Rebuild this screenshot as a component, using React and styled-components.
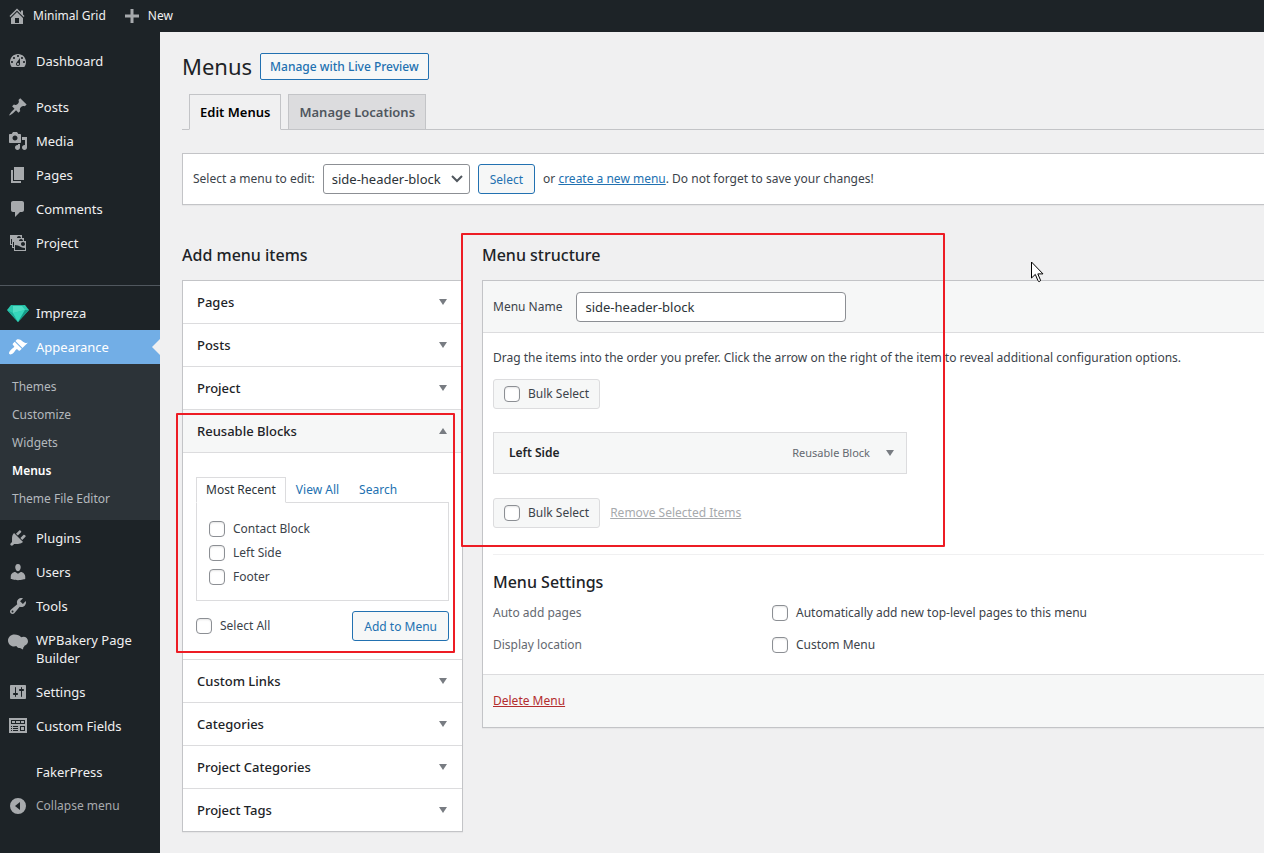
import React, { useState } from 'react';
import styled, { createGlobalStyle } from 'styled-components';

const GlobalStyle = createGlobalStyle`
  *, *::before, *::after {
    box-sizing: border-box;
  }
  body {
    margin: 0;
    background: #f0f0f1;
    color: #3c434a;
    font-family: 'Noto Sans', 'Open Sans', sans-serif;
    font-size: 12px;
    line-height: 18px;
    overflow-x: hidden;
  }
  button, input, select {
    font-family: inherit;
  }
`;

const icons = {
  home: 'M16 8.5l1.53 1.53-1.06 1.06L10 4.6l-6.47 6.49-1.06-1.06L10 2.5l4 4v-2h2v4zm-6-2.46l6 5.99V18H4v-5.97zM12 17v-5H8v5h4z',
  plus: 'M17 8.5v3h-5.500v5.500h-3v-5.500H3v-3h5.500V3h3v5.500z',
  dashboard:
    'M3.76 16h12.48c1.1-1.37 1.76-3.11 1.76-5 0-4.42-3.58-8-8-8s-8 3.58-8 8c0 1.89.66 3.63 1.76 5zM10 4c.55 0 1 .45 1 1s-.45 1-1 1-1-.45-1-1 .45-1 1-1zM6 6c.55 0 1 .45 1 1s-.45 1-1 1-1-.45-1-1 .45-1 1-1zm8 0c.55 0 1 .45 1 1s-.45 1-1 1-1-.45-1-1 .45-1 1-1zm-5.370 5.550L12 7v6c0 1.100-.9 2-2 2s-2-.9-2-2c0-.57.24-1.080.63-1.450zM4 10c.55 0 1 .45 1 1s-.45 1-1 1-1-.45-1-1 .45-1 1-1zm12 0c.55 0 1 .45 1 1s-.45 1-1 1-1-.45-1-1 .45-1 1-1zm-5 3c0-.55-.45-1-1-1s-1 .45-1 1 .45 1 1 1 1-.45 1-1z',
  post: 'M10.44 3.02l1.82-1.82 6.36 6.35-1.83 1.82c-1.05-.68-2.48-.57-3.41.36l-.75.75c-.92.93-1.04 2.35-.35 3.41l-1.83 1.82-2.41-2.41-2.8 2.79c-.42.42-3.38 2.71-3.8 2.29s1.86-3.39 2.28-3.81l2.79-2.79L4.1 9.36l1.83-1.82c1.05.69 2.48.57 3.4-.36l.75-.75c.93-.92 1.05-2.35.36-3.41z',
  media:
    'M13 11V4c0-.55-.45-1-1-1h-1.67L9 1H5L3.67 3H2c-.55 0-1 .45-1 1v7c0 .55.45 1 1 1h10c.55 0 1-.45 1-1zM7 4.5c1.38 0 2.5 1.12 2.5 2.5S8.38 9.5 7 9.5 4.5 8.38 4.5 7 5.62 4.5 7 4.5zM14 6h5v10.5c0 1.38-1.12 2.5-2.5 2.5S14 17.88 14 16.5s1.12-2.5 2.5-2.5c.17 0 .34.02.5.05V9h-3V6zm-4 8.05V13h2v3.5c0 1.38-1.12 2.5-2.5 2.5S7 17.88 7 16.5 8.12 14 9.5 14c.17 0 .34.02.5.05z',
  page: 'M6 15V2h10v13H6zm-1 1h8v2H3V5h2v11z',
  comment: 'M5 2h9c1.1 0 2 .9 2 2v7c0 1.1-.9 2-2 2h-2l-5 5v-5H5c-1.1 0-2-.9-2-2V4c0-1.1.9-2 2-2z',
  images:
    'M4 15v-3H2V2h12v3h2v3h2v10H6v-3H4zm7-12c-1.1 0-2 .9-2 2h4c0-1.1-.89-2-2-2zm-7 8V6H3v5h1zm7-3h4c0-1.1-.89-2-2-2-1.1 0-2 .9-2 2zm-5 6V9H5v5h1zm9-1c1.1 0 2-.89 2-2 0-1.1-.9-2-2-2s-2 .9-2 2c0 1.11.9 2 2 2zm2 4v-2c-5 0-5-3-10-3v5h10z',
  appearance:
    'M14.48 11.06L7.41 3.99l1.5-1.5c.5-.56 2.3-.47 3.51.32 1.21.8 1.43 1.28 2.91 2.1 1.18.64 2.45 1.26 4.45.85zm-.71.71L6.7 4.7 4.93 6.47c-.39.39-.39 1.02 0 1.41l1.06 1.06c.39.39.39 1.03 0 1.42-.6.6-1.43 1.11-2.21 1.69-.35.26-.7.53-1.01.84C1.43 14.23.4 16.08 1.4 17.07c.99 1 2.84-.03 4.18-1.36.31-.31.58-.66.85-1.02.57-.78 1.08-1.61 1.69-2.21.39-.39 1.02-.39 1.41 0l1.06 1.06c.39.39 1.02.39 1.41 0z',
  plugins:
    'M13.11 4.36L9.87 7.6 8 5.73l3.24-3.24c.35-.34 1.05-.2 1.56.32.52.51.66 1.21.31 1.55zm-8 1.77l.91-1.12 9.01 9.01-1.19.84c-.71.71-2.63 1.16-3.82 1.16H6.14L4.9 17.26c-.59.59-1.54.59-2.12 0-.59-.58-.59-1.53 0-2.12l1.24-1.24v-3.88c0-1.13.4-3.19 1.09-3.89zm7.26 3.97l3.24-3.24c.34-.35 1.04-.21 1.55.31.52.51.66 1.21.31 1.55l-3.24 3.25z',
  users:
    'M10 9.25c-2.27 0-2.73-3.44-2.73-3.44C7 4.02 7.82 2 9.97 2c2.16 0 2.98 2.02 2.71 3.81 0 0-.41 3.44-2.68 3.44zm0 2.57L12.72 10c2.39 0 4.52 2.33 4.52 4.53v2.49s-3.65 1.13-7.24 1.13c-3.65 0-7.24-1.13-7.24-1.13v-2.49c0-2.25 1.94-4.48 4.47-4.48z',
  tools:
    'M16.68 9.77c-1.34 1.34-3.3 1.67-4.95.99l-5.41 6.52c-.99.99-2.59.99-3.58 0s-.99-2.59 0-3.57l6.52-5.42c-.68-1.65-.35-3.61.99-4.95 1.28-1.28 3.12-1.62 4.72-1.06l-2.89 2.89 2.82 2.82 2.86-2.87c.53 1.58.18 3.39-1.08 4.65zM3.81 16.21c.4.39 1.04.39 1.43 0 .4-.4.4-1.04 0-1.43-.39-.4-1.03-.4-1.43 0-.39.39-.39 1.03 0 1.43z',
  bakery:
    'M6.500 4.500C2.800 4.500 0 7.200 0 10.500c0 3.400 2.800 6 6 6 .9 0 1.700-.2 2.400-.5.800 1.500 2.200 2.200 3.600 2l3 1.600.3-2.200c.6-.4 1-.9 1.200-1.600 2.100-.6 3.500-2.500 3.500-4.500 0-2.600-2-4.600-4.500-4.600-.9 0-1.700.2-2.400.6C11.800 5.500 9.400 4.500 6.500 4.500z',
  settings:
    'M18 16V4c0-.55-.45-1-1-1H3c-.55 0-1 .45-1 1v12c0 .55.45 1 1 1h14c.55 0 1-.45 1-1zM8 11h1c.55 0 1 .45 1 1s-.45 1-1 1H8v1.5c0 .28-.22.5-.5.5s-.5-.22-.5-.5V13H6c-.55 0-1-.45-1-1s.45-1 1-1h1V5.5c0-.28.22-.5.5-.5s.5.22.5.5V11zm5-2h-1c-.55 0-1-.45-1-1s.45-1 1-1h1V5.5c0-.28.22-.5.5-.5s.5.22.5.5V7h1c.55 0 1 .45 1 1s-.45 1-1 1h-1v5.5c0 .28-.22.5-.5.5s-.5-.22-.5-.5V9z',
  fields:
    'M1 2h18v15H1zm2 2v4h14V4zm1 1h3v2H4zm4 0h4v2H8zm5 0h3v2h-3zM3 10v1h1v-1zm2 0v1h5v-1zm-2 2v1h1v-1zm2 0v1h5v-1zm-2 2v1h1v-1zm2 0v1h5v-1zm7-4v5h5v-5zm1 1h3v3h-3z',
  collapse: 'M10 2a8 8 0 1 0 0 16 8 8 0 0 0 0-16zm2 12l-5-4 5-4z',
};

const Svg = styled.svg`
  display: block;
  flex: none;
  fill: currentColor;
  fill-rule: evenodd;
`;

const Icon = ({ name, size = 20 }) => (
  <Svg width={size} height={size} viewBox="0 0 20 20" aria-hidden="true">
    <path d={icons[name]} />
  </Svg>
);

const Gem = () => (
  <Svg width="22" height="20" viewBox="0 0 22 20" aria-hidden="true">
    <path fill="#2cc8ae" d="M4 2h14l4 5-11 12L0 7z" />
    <path fill="#1fb39c" d="M4 2h14l-3 1H6z" />
    <path fill="#4fdcc3" d="M6 3l9 0 3 4-12 3z" />
    <path fill="#1dab98" d="M0 7l6 3 5 9z" />
    <path fill="#36d6bc" d="M6 10l12-3-7 12z" />
    <path fill="#159a87" d="M22 7h-4l-7 12z" />
  </Svg>
);

const AdminBar = styled.header`
  display: flex;
  align-items: center;
  gap: 16px;
  height: 32px;
  padding: 0 7px;
  background: #1d2327;
`;

const BarLink = styled.a`
  display: flex;
  align-items: center;
  gap: 6px;
  color: #f0f0f1;
  text-decoration: none;
  svg {
    color: #a7aaad;
  }
`;

const Body = styled.div`
  display: flex;
  align-items: stretch;
  min-height: calc(100vh - 32px);
`;

const SideNav = styled.nav`
  flex: none;
  width: 160px;
  padding: 12px 0;
  background: #1d2327;
`;

const NavGroup = styled.div`
  padding: ${(props) => props.$top || 0}px 0 ${(props) => props.$bottom || 0}px;
`;

const NavLine = styled.div`
  border-top: 1px solid #50575e;
  margin: 25px 0 10px;
`;

const NavLink = styled.a`
  position: relative;
  display: flex;
  gap: 8px;
  padding: 8px 8px;
  font-size: 13px;
  color: ${(props) => (props.$active ? '#fff' : '#f0f0f1')};
  background: ${(props) => (props.$active ? '#72aee6' : 'transparent')};
  text-decoration: none;
  &::after {
    content: '';
    display: ${(props) => (props.$active ? 'block' : 'none')};
    position: absolute;
    right: 0;
    top: 9px;
    border: 8px solid transparent;
    border-right-color: #f0f0f1;
    border-left: 0;
  }
`;

const NavIcon = styled.span`
  display: flex;
  justify-content: center;
  flex: none;
  width: 20px;
  height: 18px;
  align-items: center;
  color: ${(props) => (props.$active ? '#fff' : '#a7aaad')};
`;

const CollapseButton = styled.button`
  display: flex;
  gap: 8px;
  width: 100%;
  padding: 8px;
  border: 0;
  background: transparent;
  color: #a7aaad;
  font-size: 12px;
  line-height: 18px;
  text-align: left;
`;

const SubMenu = styled.div`
  padding: 9px 0 7px;
  background: #2c3338;
`;

const SubLink = styled.a`
  display: block;
  padding: 5px 12px;
  color: ${(props) => (props.$current ? '#fff' : '#b4b9be')};
  font-weight: ${(props) => (props.$current ? 600 : 400)};
  text-decoration: none;
`;

const Content = styled.main`
  position: relative;
  flex: 1;
  min-width: 0;
  padding: 19px 0 20px 22px;
`;

const TitleRow = styled.div`
  display: flex;
  align-items: center;
  gap: 8px;
  height: 30px;
`;

const Title = styled.h1`
  margin: 0;
  font-size: 22px;
  font-weight: 400;
  line-height: 30px;
  color: #1d2327;
`;

const Button = styled.button`
  height: ${(props) => (props.$small ? 27 : 30)}px;
  padding: 0 ${(props) => (props.$small ? 9 : 11)}px;
  border: 1px solid #2271b1;
  border-radius: ${(props) => (props.$small ? 2 : 3)}px;
  background: #f6f7f7;
  color: #2271b1;
  font-size: 12px;
  font-weight: ${(props) => (props.$small ? 500 : 400)};
  white-space: nowrap;
`;

const TabBar = styled.div`
  display: flex;
  gap: 7px;
  margin-top: 13px;
  padding: 0 7px;
  border-bottom: 1px solid #c3c4c7;
`;

const Tab = styled.a`
  margin-bottom: -1px;
  padding: 5px 10px;
  border: 1px solid #c3c4c7;
  border-bottom-color: ${(props) => (props.$active ? '#f0f0f1' : '#c3c4c7')};
  background: ${(props) => (props.$active ? '#f0f0f1' : '#dcdcde')};
  color: ${(props) => (props.$active ? '#000' : '#50575e')};
  font-size: 13px;
  font-weight: 600;
  line-height: 24px;
  text-decoration: none;
`;

const ManageBox = styled.form`
  display: flex;
  align-items: center;
  gap: 8px;
  height: 52px;
  margin: 23px -1px 0 0;
  padding: 0 10px;
  border: 1px solid #c3c4c7;
  background: #fff;
  box-shadow: 0 1px 1px rgba(0, 0, 0, 0.04);
  white-space: nowrap;
`;

const SelectWrap = styled.span`
  position: relative;
  display: flex;
  svg {
    position: absolute;
    right: 6px;
    top: 8px;
    fill: none;
    stroke: #50575e;
    stroke-width: 2;
    pointer-events: none;
  }
`;

const Select = styled.select`
  appearance: none;
  height: 30px;
  padding: 0 27px 0 8px;
  border: 1px solid #8c8f94;
  border-radius: 3px;
  background: #fff;
  color: #2c3338;
  font-size: 13px;
`;

const Link = styled.a`
  color: ${(props) => props.$color || '#2271b1'};
`;

const Frame = styled.div`
  display: flex;
  align-items: flex-start;
  gap: 19px;
  margin-top: 38px;
`;

const Column = styled.section`
  flex: ${(props) => (props.$side ? 'none' : 1)};
  width: ${(props) => (props.$side ? '281px' : 'auto')};
  min-width: 0;
  margin-right: ${(props) => (props.$side ? 0 : -1)}px;
`;

const Heading = styled.h2`
  margin: 0 0 ${(props) => (props.$tight ? 10 : 13)}px;
  color: #1d2327;
  font-size: 16px;
  font-weight: 500;
  line-height: 24px;
`;

const Accordion = styled.div`
  border: 1px solid #c3c4c7;
  background: #fff;
  box-shadow: 0 1px 1px rgba(0, 0, 0, 0.04);
`;

const AccordionItem = styled.div`
  border-bottom: 1px solid #dcdcde;
  &:last-child {
    border-bottom: 0;
  }
`;

const AccordionTitle = styled.button`
  display: flex;
  align-items: center;
  justify-content: space-between;
  width: 100%;
  height: ${(props) => (props.$open ? 43 : 42)}px;
  padding: 0 15px 0 14px;
  border: 0;
  border-bottom: ${(props) => (props.$open ? '1px solid #dcdcde' : '0')};
  background: ${(props) => (props.$open ? '#f6f7f7' : '#fff')};
  color: #1d2327;
  font-size: 13px;
  font-weight: 500;
`;

const Arrow = styled.span`
  border: 4px solid transparent;
  border-top: ${(props) => (props.$up ? '0' : '6px solid #787c82')};
  border-bottom: ${(props) => (props.$up ? '6px solid #787c82' : '0')};
`;

const PanelBody = styled.div`
  padding: 24px 13px 18px;
`;

const PanelTabs = styled.div`
  display: flex;
`;

const PanelTab = styled.a`
  margin-bottom: -1px;
  padding: 3px 9px;
  border: 1px solid ${(props) => (props.$active ? '#dcdcde' : 'transparent')};
  border-bottom-color: ${(props) => (props.$active ? '#fff' : 'transparent')};
  background: ${(props) => (props.$active ? '#fff' : 'transparent')};
  color: ${(props) => (props.$active ? '#2c3338' : '#2271b1')};
  text-decoration: none;
  z-index: 1;
`;

const PanelList = styled.div`
  display: grid;
  gap: 6px;
  padding: 17px 12px 14px;
  border: 1px solid #dcdcde;
`;

const PanelActions = styled.div`
  display: flex;
  align-items: center;
  justify-content: space-between;
  margin-top: 10px;
`;

const CheckLabel = styled.label`
  display: flex;
  align-items: center;
  gap: 8px;
`;

const Checkbox = styled.input.attrs({ type: 'checkbox' })`
  appearance: none;
  flex: none;
  width: 16px;
  height: 16px;
  margin: 0;
  border: 1px solid #8c8f94;
  border-radius: 4px;
  background: #fff;
  box-shadow: inset 0 1px 2px rgba(0, 0, 0, 0.1);
  &:checked {
    background: #2271b1;
  }
`;

const Structure = styled.div`
  border: 1px solid #c3c4c7;
  background: #fff;
  box-shadow: 0 1px 1px rgba(0, 0, 0, 0.04);
`;

const StructureHeader = styled.div`
  display: flex;
  align-items: center;
  gap: 14px;
  height: 52px;
  padding: 0 10px;
  border-bottom: 1px solid #dcdcde;
  background: #f6f7f7;
`;

const TextInput = styled.input`
  width: 270px;
  height: 30px;
  padding: 0 8px;
  border: 1px solid #8c8f94;
  border-radius: 4px;
  background: #fff;
  color: #2c3338;
  font-size: 13px;
`;

const StructureBody = styled.div`
  padding: 16px 10px 20px;
`;

const Hint = styled.p`
  margin: 0 0 12px;
`;

const BulkRow = styled.div`
  display: flex;
  align-items: center;
  gap: 10px;
`;

const BulkLabel = styled(CheckLabel)`
  height: 30px;
  padding: 0 10px;
  border: 1px solid #dcdcde;
  border-radius: 3px;
  background: #f6f7f7;
`;

const MenuItem = styled.div`
  display: flex;
  align-items: center;
  gap: 16px;
  max-width: 414px;
  height: 42px;
  margin: 23px 0 24px;
  padding: 0 12px 0 15px;
  border: 1px solid #dcdcde;
  background: #f6f7f7;
`;

const ItemTitle = styled.span`
  flex: 1;
  color: #1d2327;
  font-weight: 600;
`;

const ItemType = styled.span`
  color: #646970;
  font-size: 11px;
`;

const Settings = styled.div`
  margin: 26px -10px 0 0;
  padding-top: 15px;
  border-top: 1px solid #f0f0f1;
`;

const SettingRow = styled.div`
  display: grid;
  grid-template-columns: 279px 1fr;
  margin-bottom: ${(props) => (props.$last ? 0 : 14)}px;
  color: #646970;
  label {
    color: #3c434a;
  }
`;

const StructureFooter = styled.div`
  display: flex;
  align-items: center;
  height: 53px;
  padding: 0 10px;
  border-top: 1px solid #dcdcde;
  background: #f6f7f7;
`;

// red frames drawn over the page
const Highlight = styled.div`
  position: absolute;
  left: ${(props) => props.$x}px;
  top: ${(props) => props.$y}px;
  width: ${(props) => props.$w}px;
  height: ${(props) => props.$h}px;
  border: 2px solid #ed1c24;
  border-radius: 1px;
  pointer-events: none;
`;

const Cursor = styled.svg`
  position: absolute;
  left: 871px;
  top: 229px;
  pointer-events: none;
`;

const firstItems = [
  { label: 'Posts', icon: 'post' },
  { label: 'Media', icon: 'media' },
  { label: 'Pages', icon: 'page' },
  { label: 'Comments', icon: 'comment' },
  { label: 'Project', icon: 'images' },
];

const lastItems = [
  { label: 'Plugins', icon: 'plugins' },
  { label: 'Users', icon: 'users' },
  { label: 'Tools', icon: 'tools' },
  { label: 'WPBakery Page Builder', icon: 'bakery' },
  { label: 'Settings', icon: 'settings' },
  { label: 'Custom Fields', icon: 'fields' },
];

const subItems = ['Themes', 'Customize', 'Widgets', 'Menus', 'Theme File Editor'];

const sections = [
  'Pages',
  'Posts',
  'Project',
  'Reusable Blocks',
  'Custom Links',
  'Categories',
  'Project Categories',
  'Project Tags',
];

const NavItem = ({ label, icon, active }) => (
  <NavLink href="#" $active={active}>
    <NavIcon $active={active}>
      {icon === 'gem' ? <Gem /> : icon && <Icon name={icon} />}
    </NavIcon>
    {label}
  </NavLink>
);

const Check = ({ label }) => (
  <CheckLabel>
    <Checkbox />
    {label}
  </CheckLabel>
);

const Sidebar = () => (
  <SideNav>
    <NavItem label="Dashboard" icon="dashboard" />
    <NavGroup $top={12}>
      {firstItems.map((item) => (
        <NavItem key={item.label} {...item} />
      ))}
    </NavGroup>
    <NavLine />
    <NavItem label="Impreza" icon="gem" />
    <NavItem label="Appearance" icon="appearance" active />
    <SubMenu>
      {subItems.map((item) => (
        <SubLink key={item} href="#" $current={item === 'Menus'}>
          {item}
        </SubLink>
      ))}
    </SubMenu>
    <NavGroup $top={1} $bottom={12}>
      {lastItems.map((item) => (
        <NavItem key={item.label} {...item} />
      ))}
    </NavGroup>
    <NavItem label="FakerPress" />
    <CollapseButton type="button">
      <NavIcon>
        <Icon name="collapse" />
      </NavIcon>
      Collapse menu
    </CollapseButton>
  </SideNav>
);

const BlocksPanel = () => (
  <PanelBody>
    <PanelTabs>
      <PanelTab href="#" $active>
        Most Recent
      </PanelTab>
      <PanelTab href="#">View All</PanelTab>
      <PanelTab href="#">Search</PanelTab>
    </PanelTabs>
    <PanelList>
      <Check label="Contact Block" />
      <Check label="Left Side" />
      <Check label="Footer" />
    </PanelList>
    <PanelActions>
      <Check label="Select All" />
      <Button type="button">Add to Menu</Button>
    </PanelActions>
  </PanelBody>
);

const BulkSelect = () => (
  <BulkLabel>
    <Checkbox />
    Bulk Select
  </BulkLabel>
);

const App = () => {
  const [open, setOpen] = useState('Reusable Blocks');
  const [menuName, setMenuName] = useState('side-header-block');

  return (
    <>
      <GlobalStyle />
      <AdminBar>
        <BarLink href="#">
          <Icon name="home" />
          Minimal Grid
        </BarLink>
        <BarLink href="#">
          <Icon name="plus" />
          New
        </BarLink>
      </AdminBar>
      <Body>
        <Sidebar />
        <Content>
          <TitleRow>
            <Title>Menus</Title>
            <Button type="button" $small>
              Manage with Live Preview
            </Button>
          </TitleRow>
          <TabBar>
            <Tab href="#" $active>
              Edit Menus
            </Tab>
            <Tab href="#">Manage Locations</Tab>
          </TabBar>
          <ManageBox onSubmit={(e) => e.preventDefault()}>
            <label htmlFor="menu">Select a menu to edit:</label>
            <SelectWrap>
              <Select id="menu" defaultValue="side-header-block">
                <option>side-header-block</option>
              </Select>
              <svg width="14" height="14" viewBox="0 0 14 14" aria-hidden="true">
                <path d="M2 4l5 5 5-5" />
              </svg>
            </SelectWrap>
            <Button type="submit">Select</Button>
            <span>
              or <Link href="#">create a new menu</Link>. Do not forget to save your changes!
            </span>
          </ManageBox>
          <Frame>
            <Column $side>
              <Heading>Add menu items</Heading>
              <Accordion>
                {sections.map((name) => (
                  <AccordionItem key={name}>
                    <AccordionTitle
                      type="button"
                      $open={open === name}
                      onClick={() => setOpen(open === name ? '' : name)}
                    >
                      {name}
                      <Arrow $up={open === name} />
                    </AccordionTitle>
                    {open === name && name === 'Reusable Blocks' && <BlocksPanel />}
                  </AccordionItem>
                ))}
              </Accordion>
            </Column>
            <Column>
              <Heading>Menu structure</Heading>
              <Structure>
                <StructureHeader>
                  <label htmlFor="menu-name">Menu Name</label>
                  <TextInput
                    id="menu-name"
                    type="text"
                    value={menuName}
                    onChange={(e) => setMenuName(e.target.value)}
                  />
                </StructureHeader>
                <StructureBody>
                  <Hint>
                    Drag the items into the order you prefer. Click the arrow on the right of the
                    item to reveal additional configuration options.
                  </Hint>
                  <BulkRow>
                    <BulkSelect />
                  </BulkRow>
                  <MenuItem>
                    <ItemTitle>Left Side</ItemTitle>
                    <ItemType>Reusable Block</ItemType>
                    <Arrow />
                  </MenuItem>
                  <BulkRow>
                    <BulkSelect />
                    <Link href="#" $color="#a7aaad">
                      Remove Selected Items
                    </Link>
                  </BulkRow>
                  <Settings>
                    <Heading as="h3" $tight>
                      Menu Settings
                    </Heading>
                    <SettingRow>
                      <span>Auto add pages</span>
                      <Check label="Automatically add new top-level pages to this menu" />
                    </SettingRow>
                    <SettingRow $last>
                      <span>Display location</span>
                      <Check label="Custom Menu" />
                    </SettingRow>
                  </Settings>
                </StructureBody>
                <StructureFooter>
                  <Link href="#" $color="#b32d2e">
                    Delete Menu
                  </Link>
                </StructureFooter>
              </Structure>
            </Column>
          </Frame>
          <Highlight $x={16} $y={381} $w={279} $h={240} />
          <Highlight $x={301} $y={201} $w={484} $h={314} />
          <Cursor width="13" height="22" viewBox="0 0 13 22" aria-hidden="true">
            <path
              d="M.5 1v16l3.800-3.600L7 19.800c.8 1.600 2.900.6 2.400-.9l-2.600-6H12z"
              fill="#fff"
              stroke="#000"
            />
          </Cursor>
        </Content>
      </Body>
    </>
  );
};

export default App;
